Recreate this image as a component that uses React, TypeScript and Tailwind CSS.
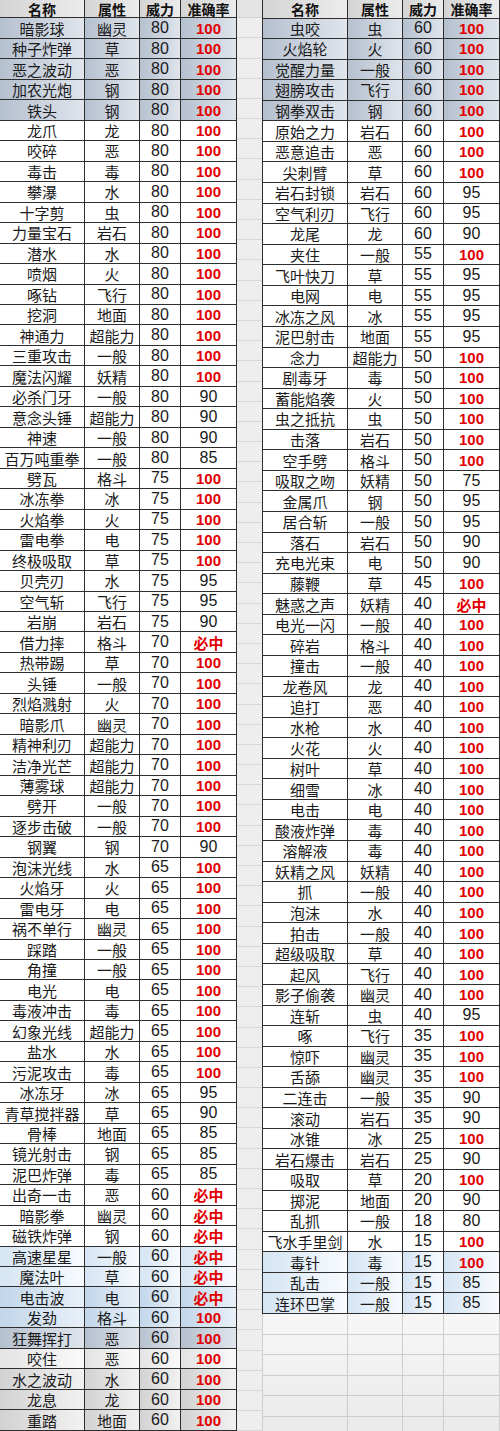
import React from "react";

type Row = [string, string, string, string];

const left: Row[] = [
  ["暗影球", "幽灵", "80", "100"],
  ["种子炸弹", "草", "80", "100"],
  ["恶之波动", "恶", "80", "100"],
  ["加农光炮", "钢", "80", "100"],
  ["铁头", "钢", "80", "100"],
  ["龙爪", "龙", "80", "100"],
  ["咬碎", "恶", "80", "100"],
  ["毒击", "毒", "80", "100"],
  ["攀瀑", "水", "80", "100"],
  ["十字剪", "虫", "80", "100"],
  ["力量宝石", "岩石", "80", "100"],
  ["潜水", "水", "80", "100"],
  ["喷烟", "火", "80", "100"],
  ["啄钻", "飞行", "80", "100"],
  ["挖洞", "地面", "80", "100"],
  ["神通力", "超能力", "80", "100"],
  ["三重攻击", "一般", "80", "100"],
  ["魔法闪耀", "妖精", "80", "100"],
  ["必杀门牙", "一般", "80", "90"],
  ["意念头锤", "超能力", "80", "90"],
  ["神速", "一般", "80", "90"],
  ["百万吨重拳", "一般", "80", "85"],
  ["劈瓦", "格斗", "75", "100"],
  ["冰冻拳", "冰", "75", "100"],
  ["火焰拳", "火", "75", "100"],
  ["雷电拳", "电", "75", "100"],
  ["终极吸取", "草", "75", "100"],
  ["贝壳刃", "水", "75", "95"],
  ["空气斩", "飞行", "75", "95"],
  ["岩崩", "岩石", "75", "90"],
  ["借力摔", "格斗", "70", "必中"],
  ["热带踢", "草", "70", "100"],
  ["头锤", "一般", "70", "100"],
  ["烈焰溅射", "火", "70", "100"],
  ["暗影爪", "幽灵", "70", "100"],
  ["精神利刃", "超能力", "70", "100"],
  ["洁净光芒", "超能力", "70", "100"],
  ["薄雾球", "超能力", "70", "100"],
  ["劈开", "一般", "70", "100"],
  ["逐步击破", "一般", "70", "100"],
  ["钢翼", "钢", "70", "90"],
  ["泡沫光线", "水", "65", "100"],
  ["火焰牙", "火", "65", "100"],
  ["雷电牙", "电", "65", "100"],
  ["祸不单行", "幽灵", "65", "100"],
  ["踩踏", "一般", "65", "100"],
  ["角撞", "一般", "65", "100"],
  ["电光", "电", "65", "100"],
  ["毒液冲击", "毒", "65", "100"],
  ["幻象光线", "超能力", "65", "100"],
  ["盐水", "水", "65", "100"],
  ["污泥攻击", "毒", "65", "100"],
  ["冰冻牙", "冰", "65", "95"],
  ["青草搅拌器", "草", "65", "90"],
  ["骨棒", "地面", "65", "85"],
  ["镜光射击", "钢", "65", "85"],
  ["泥巴炸弹", "毒", "65", "85"],
  ["出奇一击", "恶", "60", "必中"],
  ["暗影拳", "幽灵", "60", "必中"],
  ["磁铁炸弹", "钢", "60", "必中"],
  ["高速星星", "一般", "60", "必中"],
  ["魔法叶", "草", "60", "必中"],
  ["电击波", "电", "60", "必中"],
  ["发劲", "格斗", "60", "100"],
  ["狂舞挥打", "恶", "60", "100"],
  ["咬住", "恶", "60", "100"],
  ["水之波动", "水", "60", "100"],
  ["龙息", "龙", "60", "100"],
  ["重踏", "地面", "60", "100"],
];

const right: Row[] = [
  ["虫咬", "虫", "60", "100"],
  ["火焰轮", "火", "60", "100"],
  ["觉醒力量", "一般", "60", "100"],
  ["翅膀攻击", "飞行", "60", "100"],
  ["钢拳双击", "钢", "60", "100"],
  ["原始之力", "岩石", "60", "100"],
  ["恶意追击", "恶", "60", "100"],
  ["尖刺臂", "草", "60", "100"],
  ["岩石封锁", "岩石", "60", "95"],
  ["空气利刃", "飞行", "60", "95"],
  ["龙尾", "龙", "60", "90"],
  ["夹住", "一般", "55", "100"],
  ["飞叶快刀", "草", "55", "95"],
  ["电网", "电", "55", "95"],
  ["冰冻之风", "冰", "55", "95"],
  ["泥巴射击", "地面", "55", "95"],
  ["念力", "超能力", "50", "100"],
  ["剧毒牙", "毒", "50", "100"],
  ["蓄能焰袭", "火", "50", "100"],
  ["虫之抵抗", "虫", "50", "100"],
  ["击落", "岩石", "50", "100"],
  ["空手劈", "格斗", "50", "100"],
  ["吸取之吻", "妖精", "50", "75"],
  ["金属爪", "钢", "50", "95"],
  ["居合斩", "一般", "50", "95"],
  ["落石", "岩石", "50", "90"],
  ["充电光束", "电", "50", "90"],
  ["藤鞭", "草", "45", "100"],
  ["魅惑之声", "妖精", "40", "必中"],
  ["电光一闪", "一般", "40", "100"],
  ["碎岩", "格斗", "40", "100"],
  ["撞击", "一般", "40", "100"],
  ["龙卷风", "龙", "40", "100"],
  ["追打", "恶", "40", "100"],
  ["水枪", "水", "40", "100"],
  ["火花", "火", "40", "100"],
  ["树叶", "草", "40", "100"],
  ["细雪", "冰", "40", "100"],
  ["电击", "电", "40", "100"],
  ["酸液炸弹", "毒", "40", "100"],
  ["溶解液", "毒", "40", "100"],
  ["妖精之风", "妖精", "40", "100"],
  ["抓", "一般", "40", "100"],
  ["泡沫", "水", "40", "100"],
  ["拍击", "一般", "40", "100"],
  ["超级吸取", "草", "40", "100"],
  ["起风", "飞行", "40", "100"],
  ["影子偷袭", "幽灵", "40", "100"],
  ["连斩", "虫", "40", "95"],
  ["啄", "飞行", "35", "100"],
  ["惊吓", "幽灵", "35", "100"],
  ["舌舔", "幽灵", "35", "100"],
  ["二连击", "一般", "35", "90"],
  ["滚动", "岩石", "35", "90"],
  ["冰锥", "冰", "25", "100"],
  ["岩石爆击", "岩石", "25", "90"],
  ["吸取", "草", "20", "100"],
  ["掷泥", "地面", "20", "90"],
  ["乱抓", "一般", "18", "80"],
  ["飞水手里剑", "水", "15", "100"],
  ["毒针", "毒", "15", "100"],
  ["乱击", "一般", "15", "85"],
  ["连环巴掌", "一般", "15", "85"],
];

type Tone = "white" | "steel" | "sky" | "skyDeep" | "gray" | "grayLight";

const toneClass: Record<Tone, string> = {
  white: "bg-white",
  steel: "bg-linear-to-r from-[#b5c0cf] to-[#e0e5ec]",
  sky: "bg-linear-to-r from-[#d5e5f3] to-[#f8fbfe]",
  skyDeep: "bg-linear-to-r from-[#c2d6ea] to-[#e8f0f8]",
  gray: "bg-linear-to-r from-[#d2d2d2] to-[#f2f2f2]",
  grayLight: "bg-linear-to-r from-[#e4e4e4] to-[#fafafa]",
};

const leftTone = (i: number): Tone => {
  if (i <= 4) return "steel";
  if (i === 60 || i === 61) return "sky";
  if (i === 62 || i === 63) return "skyDeep";
  if (i === 64) return "steel";
  if (i === 65) return "grayLight";
  if (i >= 66) return "gray";
  return "white";
};

const rightTone = (i: number): Tone => {
  if (i <= 4) return "steel";
  if (i >= 60) return "sky";
  return "white";
};

const cjk = { fontFamily: '"Noto Sans CJK SC", "Noto Sans", sans-serif' };
const num = { fontFamily: '"Liberation Sans", Arial, sans-serif' };

const cols = "grid grid-cols-[85px_55px_41px_56px]";
const cell = "flex items-center justify-center border-r border-b border-[#2e2e2e]";

function Header() {
  const labels = ["名称", "属性", "威力", "准确率"];
  return (
    <div className={`${cols} h-[18.5px]`}>
      {labels.map((l) => (
        <div
          key={l}
          className={`${cell} bg-linear-to-r from-[#d4d4d4] to-[#ececec] text-[14px] font-bold leading-[14px] text-[#111] whitespace-nowrap`}
          style={cjk}
        >
          {l}
        </div>
      ))}
    </div>
  );
}

function DataRow({ r, tone }: { r: Row; tone: Tone }) {
  const t = toneClass[tone];
  const strong = r[3] === "100" || r[3] === "必中";
  return (
    <div className={`${cols} h-[20.57px]`}>
      <div className={`${cell} ${t} text-[15px] leading-none text-[#1a1a1a] whitespace-nowrap`} style={cjk}>
        {r[0]}
      </div>
      <div className={`${cell} ${t} text-[15px] leading-none text-[#1a1a1a] whitespace-nowrap`} style={cjk}>
        {r[1]}
      </div>
      <div className={`${cell} ${t} text-[16px] leading-none text-[#1a1a1a]`} style={num}>
        {r[2]}
      </div>
      {strong ? (
        <div
          className={`${cell} ${t} text-[15px] font-bold leading-none text-[#e30000]`}
          style={r[3] === "必中" ? cjk : num}
        >
          {r[3]}
        </div>
      ) : (
        <div className={`${cell} ${t} text-[16px] leading-none text-[#1a1a1a]`} style={num}>
          {r[3]}
        </div>
      )}
    </div>
  );
}

function EmptyRow() {
  return (
    <div className={`${cols} h-[20.57px]`}>
      {[0, 1, 2, 3].map((k) => (
        <div key={k} className="border-r border-b border-[#cdcdcd]" />
      ))}
    </div>
  );
}

export default function App() {
  const gapRows = Array.from({ length: 70 });
  return (
    <div className="w-[500px] h-[1431px] overflow-hidden flex bg-linear-to-b from-[#f3f3f3] to-[#ececec]">
      <div className="w-[237px] shrink-0 flex flex-col">
        <Header />
        {left.map((r, i) => (
          <DataRow key={i} r={r} tone={leftTone(i)} />
        ))}
      </div>
      <div className="w-[25px] shrink-0 flex flex-col bg-[#eeeeee]">
        <div className="h-[18.5px] border-b border-[#d2d2d2] bg-[#e4e4e4]" />
        {gapRows.map((_, i) => (
          <div key={i} className="h-[20.57px] border-b border-[#d8d8d8]" />
        ))}
      </div>
      <div className="w-[238px] shrink-0 flex flex-col">
        <div className="border-l border-[#2e2e2e]">
          <Header />
          {right.map((r, i) => (
            <DataRow key={i} r={r} tone={rightTone(i)} />
          ))}
        </div>
        <div className="border-l border-[#cdcdcd] bg-linear-to-b from-[#f7f7f7] to-[#e9e9e9]">
          {Array.from({ length: 6 }).map((_, i) => (
            <EmptyRow key={i} />
          ))}
        </div>
      </div>
    </div>
  );
}
